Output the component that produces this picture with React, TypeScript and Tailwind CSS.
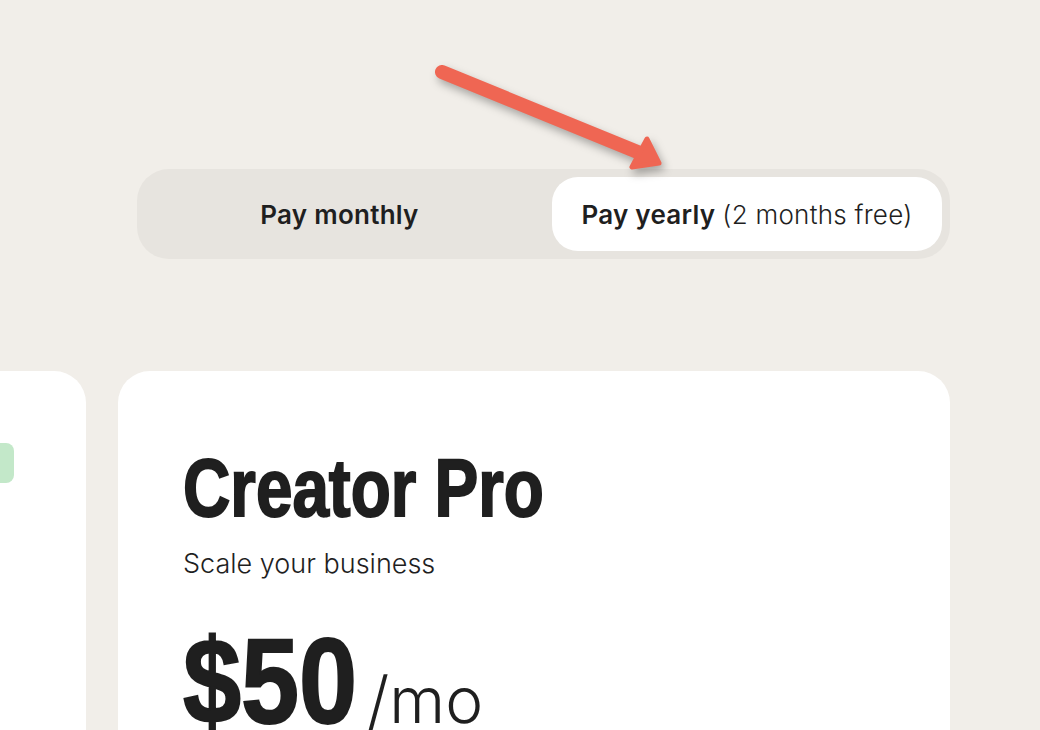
import * as React from "react"

const heading = { fontFamily: '"Liberation Sans", Arimo, sans-serif' }

function Arrow() {
  return (
    <svg
      className="absolute left-0 top-0 drop-shadow-[3px_5px_4px_rgba(0,0,0,0.3)]"
      width="1040"
      height="260"
      viewBox="0 0 1040 260"
    >
      <line x1="442" y1="72" x2="640" y2="153" stroke="#ef6653" strokeWidth="14" strokeLinecap="round" />
      <polygon
        points="659,163 647,139 632,167"
        fill="#ef6653"
        stroke="#ef6653"
        strokeWidth="5"
        strokeLinejoin="round"
      />
    </svg>
  )
}

function BillingToggle() {
  return (
    <div className="flex h-[90px] w-[813px] items-stretch rounded-[32px] bg-[#e7e4df] p-2 text-[26px] tracking-[0.01em] text-[#1f1f1f]">
      <button className="flex flex-1 items-center justify-center pr-[18px] font-semibold">Pay monthly</button>
      <button className="flex w-[390px] items-center justify-center rounded-[26px] bg-white">
        <span className="font-semibold">Pay yearly</span>
        <span className="ml-[7px] font-light">(2 months free)</span>
      </button>
    </div>
  )
}

function PlanCard({ name, tagline, price }: { name: string; tagline: string; price: string }) {
  return (
    <div className="h-[480px] w-[832px] shrink-0 rounded-[32px] bg-white pl-[65px] pt-[76px] text-[#1f1f1f]">
      <h2
        style={heading}
        className="origin-left scale-x-[0.8] whitespace-nowrap text-[82px] font-bold leading-none [-webkit-text-stroke:2px_#1f1f1f]"
      >
        {name}
      </h2>
      <p className="mt-[21px] text-[27px] font-light leading-none">{tagline}</p>
      <div className="mt-[44px] flex items-baseline">
        <span className="inline-block w-[174px]">
          <span
            style={heading}
            className="inline-block origin-left scale-x-[0.87] text-[120px] font-bold leading-none [-webkit-text-stroke:2px_#1f1f1f]"
          >
            {price}
          </span>
        </span>
        <span className="ml-[10px] text-[64px] font-light leading-none">/mo</span>
      </div>
    </div>
  )
}

export default function App() {
  return (
    <div className="relative h-[730px] overflow-hidden bg-[#f1eee9]" style={{ fontFamily: 'Inter, "Noto Sans", sans-serif' }}>
      <div className="flex flex-col items-end pr-[90px] pt-[169px]">
        <BillingToggle />
        <div className="mt-[112px] flex gap-8">
          <div className="h-[480px] w-[832px] shrink-0 rounded-[32px] bg-white pt-[72px]">
            <div className="ml-auto mr-[72px] h-10 w-[120px] rounded-lg bg-[#c3e8c9]" />
          </div>
          <PlanCard name="Creator Pro" tagline="Scale your business" price="$50" />
        </div>
      </div>
      <Arrow />
    </div>
  )
}
